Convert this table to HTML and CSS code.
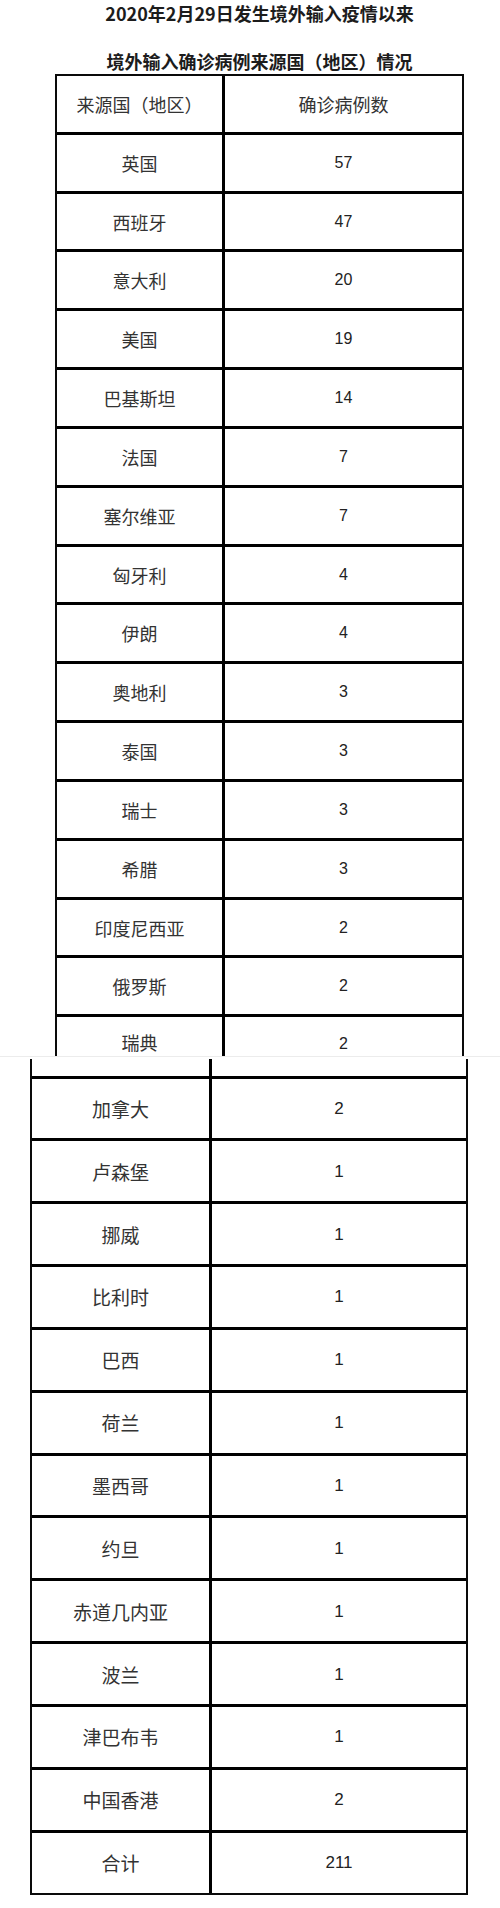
FILE: index.html
```html
<!DOCTYPE html>
<html lang="zh-CN">
<head>
<meta charset="utf-8">
<title>境外输入确诊病例来源国（地区）情况</title>
<link rel="stylesheet" href="styles.css">
</head>
<body>
<section class="shot shot-top">
  <div class="block">
    <h1 class="title title-1">2020年2月29日发生境外输入疫情以来</h1>
    <h2 class="title title-2">境外输入确诊病例来源国（地区）情况</h2>
    <div class="tbl tbl-top">
      <div class="row"><div class="c name">来源国（地区）</div><div class="c">确诊病例数</div></div>
      <div class="row"><div class="c name">英国</div><div class="c num">57</div></div>
      <div class="row"><div class="c name">西班牙</div><div class="c num">47</div></div>
      <div class="row"><div class="c name">意大利</div><div class="c num">20</div></div>
      <div class="row"><div class="c name">美国</div><div class="c num">19</div></div>
      <div class="row"><div class="c name">巴基斯坦</div><div class="c num">14</div></div>
      <div class="row"><div class="c name">法国</div><div class="c num">7</div></div>
      <div class="row"><div class="c name">塞尔维亚</div><div class="c num">7</div></div>
      <div class="row"><div class="c name">匈牙利</div><div class="c num">4</div></div>
      <div class="row"><div class="c name">伊朗</div><div class="c num">4</div></div>
      <div class="row"><div class="c name">奥地利</div><div class="c num">3</div></div>
      <div class="row"><div class="c name">泰国</div><div class="c num">3</div></div>
      <div class="row"><div class="c name">瑞士</div><div class="c num">3</div></div>
      <div class="row"><div class="c name">希腊</div><div class="c num">3</div></div>
      <div class="row"><div class="c name">印度尼西亚</div><div class="c num">2</div></div>
      <div class="row"><div class="c name">俄罗斯</div><div class="c num">2</div></div>
      <div class="row row-tail"><div class="c name">瑞典</div><div class="c num">2</div></div>
    </div>
  </div>
</section>
<section class="shot shot-bottom">
  <div class="tbl tbl-bottom">
    <div class="row row-cut"><div class="c name"></div><div class="c"></div></div>
    <div class="row"><div class="c name">加拿大</div><div class="c num">2</div></div>
    <div class="row"><div class="c name">卢森堡</div><div class="c num">1</div></div>
    <div class="row"><div class="c name">挪威</div><div class="c num">1</div></div>
    <div class="row"><div class="c name">比利时</div><div class="c num">1</div></div>
    <div class="row"><div class="c name">巴西</div><div class="c num">1</div></div>
    <div class="row"><div class="c name">荷兰</div><div class="c num">1</div></div>
    <div class="row"><div class="c name">墨西哥</div><div class="c num">1</div></div>
    <div class="row"><div class="c name">约旦</div><div class="c num">1</div></div>
    <div class="row"><div class="c name">赤道几内亚</div><div class="c num">1</div></div>
    <div class="row"><div class="c name">波兰</div><div class="c num">1</div></div>
    <div class="row"><div class="c name">津巴布韦</div><div class="c num">1</div></div>
    <div class="row"><div class="c name">中国香港</div><div class="c num">2</div></div>
    <div class="row row-last"><div class="c name">合计</div><div class="c num">211</div></div>
  </div>
</section>
</body>
</html>
```
FILE: styles.css
```css
html, body {
  margin: 0;
  padding: 0;
  background: #fff;
}
body {
  width: 500px;
  font-family: "Noto Sans CJK SC", "Noto Sans", sans-serif;
  color: #333;
}
.shot {
  box-sizing: border-box;
  overflow: hidden;
  background: #fff;
}
.shot-top {
  height: 1056px;
}
.block {
  margin-left: 55px;
  width: 409px;
}
.title {
  margin: 0;
  text-align: center;
  font-size: 18px;
  line-height: 26px;
  font-weight: 700;
  color: #1c1c1c;
  white-space: nowrap;
}
.title-2 {
  margin-top: 22px;
  margin-bottom: 0;
}
.tbl {
  box-sizing: border-box;
  border: 2px solid #0a0a0a;
}
.tbl-top {
  width: 409px;
  border-bottom: 0;
}
.row {
  box-sizing: border-box;
  display: grid;
  border-bottom: 3px solid #000;
}
.tbl-top .row {
  grid-template-columns: 168px 1fr;
  height: 58.83px;
}
.tbl-top .row-tail {
  height: 38.7px;
  border-bottom: 0;
}
.row-tail .c {
  align-items: flex-start;
  padding-top: 15.5px;
}
.c {
  box-sizing: border-box;
  display: flex;
  align-items: center;
  justify-content: center;
  white-space: nowrap;
  line-height: 1;
}
.name {
  border-right: 3px solid #000;
}
.tbl-top .c {
  font-size: 18px;
}
.num {
  font-family: "Liberation Sans", Arial, sans-serif;
  color: #222;
}
.tbl-top .num {
  font-size: 16px;
}
.row-tail .num {
  padding-top: 19px;
}
.shot-bottom {
  height: 852px;
  border-top: 1px solid #ececec;
  padding-top: 1.5px;
}
.tbl-bottom {
  width: 438px;
  margin-left: 30px;
  border-top: 0;
}
.tbl-bottom .row {
  grid-template-columns: 180px 1fr;
  height: 62.85px;
}
.tbl-bottom .row-cut {
  height: 20px;
}
.tbl-bottom .row-last {
  border-bottom: 0;
  height: 60px;
}
.tbl-bottom .c {
  font-size: 19px;
}
.tbl-bottom .num {
  font-size: 17px;
}
```
